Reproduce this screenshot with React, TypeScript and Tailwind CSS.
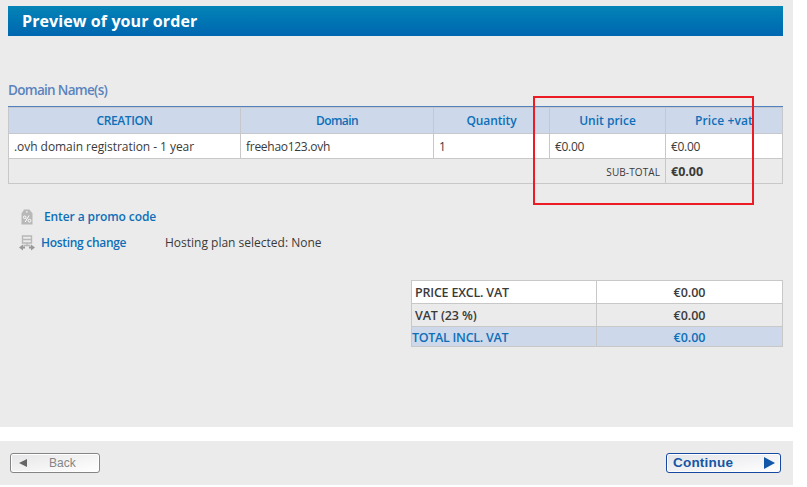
import React from 'react';

const head = 'flex items-center justify-center border-r border-[#c6c8cb] pt-px text-[12px] leading-[18px] font-semibold text-[#0c6fb8]';
const cell = 'flex items-center border-r border-[#c8c8c8] pt-[2px] pl-[5px] text-[12px] text-[#3a3a3a]';

function PromoIcon() {
  return (
    <svg width="12" height="16" viewBox="0 0 12 16" className="block">
      <path d="M3 .5h5.500l3 4V15.500H.5V4.500Z" fill="#b8b8b8" />
      <circle cx="5.800" cy="2.800" r=".9" fill="#ebebeb" />
      <path d="M8 6.500 4.200 13" stroke="#fff" strokeWidth="1" />
      <circle cx="3.700" cy="8.300" r="1.300" fill="none" stroke="#fff" />
      <circle cx="8.500" cy="11.700" r="1.400" fill="none" stroke="#fff" />
    </svg>
  );
}

function HostingIcon() {
  return (
    <svg width="16" height="16" viewBox="0 0 16 16" className="block">
      <path d="M3.500 1h9v7h-9zM3.500 4.500h9M8 8v3M4.500 10.500h7" fill="none" stroke="#b8b8b8" strokeWidth="1.400" />
      <path d="M0 12.500 4 9.500v2h2v2H4v2zM16 12.500l-4-3v2h-2v2h2v2z" fill="#999" />
    </svg>
  );
}

export default function App() {
  return (
    <div className="h-[487px] w-[807px] overflow-hidden bg-white font-['Open_Sans','Noto_Sans',sans-serif]">
      <main className="relative h-[427px] w-[793px] bg-[#ebebeb] pt-[6px] pl-[8px]">
        <h1 className="flex h-[30px] w-[775px] items-center bg-linear-to-b from-[#0584b6] to-[#0066b0] pl-[14px] text-[16px] font-bold text-white">
          <span className="tracking-[0.1px] whitespace-nowrap">Preview of your order</span>
        </h1>
        <h2 className="mt-[44px] h-[20px] text-[13.5px] leading-[20px] font-semibold tracking-[-0.7px] text-[#5b83bd]">Domain Name(s)</h2>

        <section className="mt-[6px] w-[775px] border-t border-[#4f80bf]">
          <div className="grid h-[27px] grid-cols-[232px_193px_116px_116px_117px] border-t border-b border-l border-[#c6c8cb] bg-[#cdd8ea]">
            <div className={head}><span className="tracking-[-0.4px]">CREATION</span></div>
            <div className={head}><span className="tracking-[-0.6px]">Domain</span></div>
            <div className={head}><span className="tracking-[-0.1px]">Quantity</span></div>
            <div className={head}>Unit price</div>
            <div className={head}><span className="tracking-[0.1px]">Price +vat</span></div>
          </div>
          <div className="grid h-[25px] grid-cols-[232px_193px_116px_116px_117px] border-b border-l border-[#c8c8c8] bg-white">
            <div className={cell}><span className="tracking-[-0.05px]">.ovh domain registration - 1 year</span></div>
            <div className={cell}><span className="tracking-[-0.28px]">freehao123.ovh</span></div>
            <div className={cell}>1</div>
            <div className={cell}><span className="tracking-[-0.3px]">€0.00</span></div>
            <div className={cell}><span className="tracking-[-0.3px]">€0.00</span></div>
          </div>
          <div className="grid h-[25px] grid-cols-[657px_117px] border-b border-l border-[#c8c8c8] text-[#3a3a3a]">
            <div className="flex items-center justify-end border-r border-[#c8c8c8] pt-[2px] pr-[5px] text-[10px] font-medium tracking-[0.1px]">SUB-TOTAL</div>
            <div className="flex items-center border-r border-[#c8c8c8] pt-[2px] pl-[5px] text-[12.5px] font-bold">€0.00</div>
          </div>
        </section>

        <div className="mt-[24px] flex h-[18px] items-center pl-[13px] text-[12px] font-semibold text-[#0c6fb8]">
          <PromoIcon />
          <span className="ml-[11px] tracking-[-0.1px]">Enter a promo code</span>
        </div>
        <div className="mt-[8px] flex h-[18px] items-center pl-[11px] text-[12px]">
          <HostingIcon />
          <span className="ml-[6px] w-[124px] font-semibold tracking-[-0.3px] text-[#0c6fb8]">Hosting change</span>
          <span className="text-[#3a3a3a]">Hosting plan selected: None</span>
        </div>

        <section className="mt-[28px] ml-[403px] w-[372px] border-t border-l border-[#c8c8c8] text-[12.5px] font-semibold text-[#3a3a3a]">
          <div className="grid h-[23px] grid-cols-[185px_186px] border-b border-[#c8c8c8] bg-white">
            <div className="flex items-center border-r border-[#c8c8c8] pt-[2px] pl-[3px] tracking-[-0.2px]">PRICE EXCL. VAT</div>
            <div className="flex items-center justify-center border-r border-[#c8c8c8] pt-[2px]">€0.00</div>
          </div>
          <div className="grid h-[23px] grid-cols-[185px_186px] border-b border-[#c8c8c8]">
            <div className="flex items-center border-r border-[#c8c8c8] pt-[2px] pl-[3px] tracking-[-0.1px]">VAT (23 %)</div>
            <div className="flex items-center justify-center border-r border-[#c8c8c8] pt-[2px]">€0.00</div>
          </div>
          <div className="grid h-[20px] grid-cols-[185px_186px] border-b border-[#c8c8c8] bg-[#cdd8ea] leading-[17px] text-[#0c6fb8]">
            <div className="flex items-center border-r border-[#c8c8c8] pt-px tracking-[-0.28px]">TOTAL INCL. VAT</div>
            <div className="flex items-center justify-center border-r border-[#c8c8c8] pt-px">€0.00</div>
          </div>
        </section>

        <div className="pointer-events-none absolute top-[96px] left-[533px] h-[109px] w-[221px] border-2 border-[#ed1c24]" />
      </main>

      <footer className="mt-[14px] flex h-[44px] w-[793px] items-center justify-between bg-[#ebebeb] pr-[12px] pl-[10px] font-['Liberation_Sans',Arial,sans-serif]">
        <button className="flex h-[20px] w-[90px] items-center rounded-[3px] border border-[#858585] bg-linear-to-br from-[#e6e6e8] to-white pl-[8px] text-[12px] text-[#858585] shadow-[inset_0_0_0_1px_#fff]">
          <svg width="8" height="8" viewBox="0 0 8 8"><path d="M0 4 8 0v8z" fill="#666" /></svg>
          <span className="ml-[22px]">Back</span>
        </button>
        <button className="flex h-[20px] w-[115px] items-center justify-between rounded-[3px] border border-[#1749a0] bg-linear-to-br from-[#e3e4e8] to-white pr-[5px] pl-[6px] text-[13.5px] font-bold text-[#1556a5] shadow-[inset_0_0_0_1px_#fff]">
          <span className="pt-px tracking-[0.2px]">Continue</span>
          <svg width="11" height="12" viewBox="0 0 11 12"><path d="M0 0 11 6 0 12z" fill="#1258a8" /></svg>
        </button>
      </footer>
    </div>
  );
}
